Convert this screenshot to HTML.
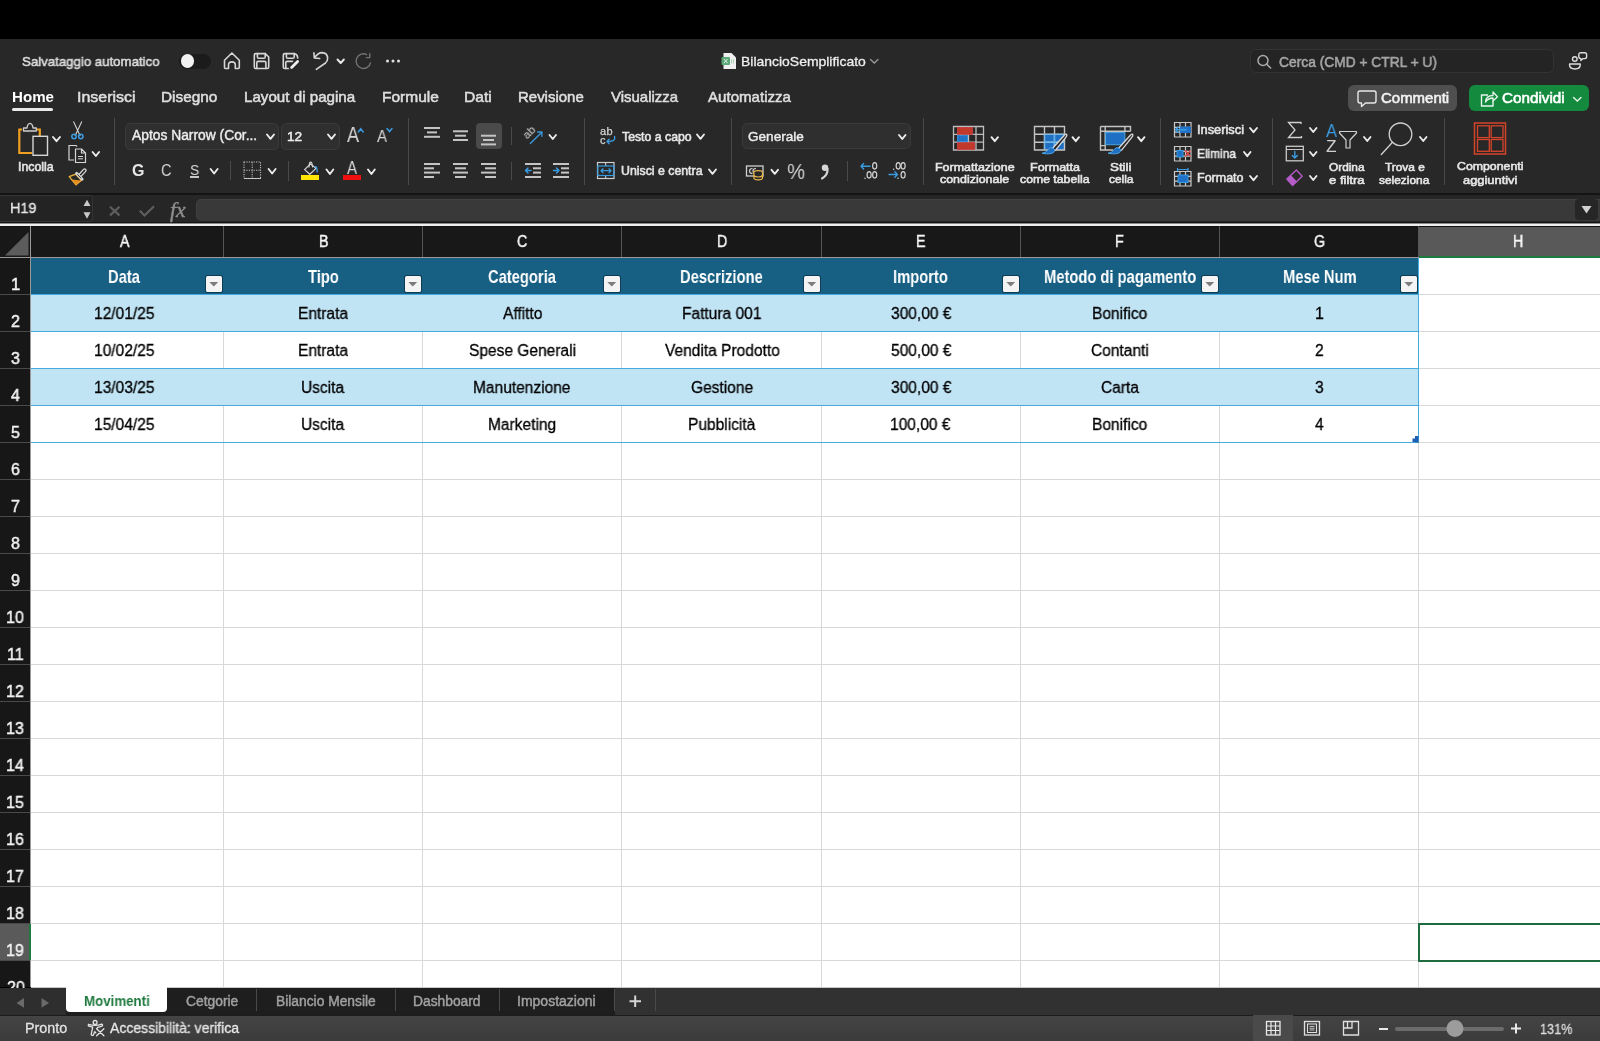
<!DOCTYPE html><html><head><meta charset='utf-8'><style>
*{box-sizing:border-box;margin:0;padding:0}
html,body{width:1600px;height:1041px;overflow:hidden;background:#000;font-family:"Liberation Sans",sans-serif;}
.a{position:absolute}
.t{position:absolute;white-space:nowrap;line-height:1;transform-origin:0 0;will-change:transform}
</style></head><body><div class="a" style="left:0px;top:0px;width:1600px;height:39px;background:#000"></div>
<div class="a" style="left:0px;top:39px;width:1600px;height:155px;background:#282828"></div>
<div class="a" style="left:0px;top:193px;width:1600px;height:2px;background:#141414"></div>
<div class="a" style="left:0px;top:195px;width:1600px;height:27px;background:#262626"></div>
<div class="a" style="left:0px;top:222px;width:1600px;height:1px;background:#141414"></div>
<div class="a" style="left:0px;top:223px;width:1600px;height:1px;background:#8a8a8a"></div>
<div class="a" style="left:0px;top:224px;width:1600px;height:2px;background:#efefef"></div>
<div class="a" style="left:0px;top:226px;width:1600px;height:1px;background:#111"></div>
<div class="a" style="left:0px;top:227px;width:1600px;height:30px;background:#181818"></div>
<div class="t" style="left:22.40px;top:54.00px;font-size:13.37px;color:#dcdcdc;font-weight:normal;transform:scaleX(0.9902);line-height:15px;-webkit-text-stroke:0.55px #dcdcdc;">Salvataggio automatico</div>
<div class="a" style="left:179px;top:53.5px;width:32px;height:15px;background:#1b1b1b;border-radius:8px"></div>
<div class="a" style="left:180.5px;top:54px;width:13.5px;height:13.5px;background:#f2f2f2;border-radius:50%"></div>
<div class="t" style="left:741.46px;top:54.00px;font-size:13.37px;color:#eeeeee;font-weight:normal;transform:scaleX(1.0439);line-height:15px;-webkit-text-stroke:0.3px #eeeeee;">BilancioSemplificato</div>
<div class="a" style="left:1250px;top:49px;width:304px;height:24px;background:#242424;border:1px solid #333;border-radius:6px"></div>
<div class="t" style="left:1278.71px;top:55.00px;font-size:13.81px;color:#a5a5a5;font-weight:normal;transform:scaleX(0.9990);line-height:15px;-webkit-text-stroke:0.55px #a5a5a5;">Cerca (CMD + CTRL + U)</div>
<div class="t" style="left:11.50px;top:88.00px;font-size:14.97px;color:#ffffff;font-weight:bold;transform:scaleX(1.0102);line-height:17px;">Home</div>
<div class="t" style="left:77.03px;top:88.00px;font-size:14.97px;color:#dedede;font-weight:normal;transform:scaleX(1.0663);line-height:17px;-webkit-text-stroke:0.55px #dedede;">Inserisci</div>
<div class="t" style="left:161.24px;top:88.00px;font-size:14.97px;color:#dedede;font-weight:normal;transform:scaleX(1.0266);line-height:17px;-webkit-text-stroke:0.55px #dedede;">Disegno</div>
<div class="t" style="left:243.76px;top:88.00px;font-size:14.97px;color:#dedede;font-weight:normal;transform:scaleX(1.0123);line-height:17px;-webkit-text-stroke:0.55px #dedede;">Layout di pagina</div>
<div class="t" style="left:381.73px;top:88.00px;font-size:14.97px;color:#dedede;font-weight:normal;transform:scaleX(1.0375);line-height:17px;-webkit-text-stroke:0.55px #dedede;">Formule</div>
<div class="t" style="left:464.22px;top:88.00px;font-size:14.97px;color:#dedede;font-weight:normal;transform:scaleX(1.0456);line-height:17px;-webkit-text-stroke:0.55px #dedede;">Dati</div>
<div class="t" style="left:517.52px;top:88.00px;font-size:14.97px;color:#dedede;font-weight:normal;transform:scaleX(0.9984);line-height:17px;-webkit-text-stroke:0.55px #dedede;">Revisione</div>
<div class="t" style="left:610.94px;top:88.00px;font-size:14.97px;color:#dedede;font-weight:normal;transform:scaleX(0.9987);line-height:17px;-webkit-text-stroke:0.55px #dedede;">Visualizza</div>
<div class="t" style="left:707.97px;top:88.00px;font-size:14.97px;color:#dedede;font-weight:normal;transform:scaleX(1.0078);line-height:17px;-webkit-text-stroke:0.55px #dedede;">Automatizza</div>
<div class="a" style="left:12px;top:108px;width:41px;height:3.2px;background:#e8e8e8;border-radius:2px"></div>
<div class="a" style="left:1348px;top:85px;width:109px;height:26px;background:#4f4f4f;border-radius:6px"></div>
<div class="t" style="left:1380.75px;top:91.00px;font-size:13.81px;color:#f2f2f2;font-weight:normal;transform:scaleX(1.0847);line-height:15px;-webkit-text-stroke:0.55px #f2f2f2;">Commenti</div>
<div class="a" style="left:1468.5px;top:85px;width:120.5px;height:26px;background:#138a3e;border-radius:6px"></div>
<div class="t" style="left:1501.84px;top:91.00px;font-size:13.81px;color:#ffffff;font-weight:normal;transform:scaleX(1.1055);line-height:15px;-webkit-text-stroke:0.55px #ffffff;">Condividi</div>
<div class="a" style="left:113.5px;top:118px;width:1.3px;height:67px;background:#4a4a4a"></div>
<div class="a" style="left:407.5px;top:118px;width:1.3px;height:67px;background:#4a4a4a"></div>
<div class="a" style="left:583.5px;top:118px;width:1.3px;height:67px;background:#4a4a4a"></div>
<div class="a" style="left:730.5px;top:118px;width:1.3px;height:67px;background:#4a4a4a"></div>
<div class="a" style="left:922.5px;top:118px;width:1.3px;height:67px;background:#4a4a4a"></div>
<div class="a" style="left:1159.5px;top:118px;width:1.3px;height:67px;background:#4a4a4a"></div>
<div class="a" style="left:1272px;top:118px;width:1.3px;height:67px;background:#4a4a4a"></div>
<div class="a" style="left:1443.5px;top:118px;width:1.3px;height:67px;background:#4a4a4a"></div>
<div class="a" style="left:230px;top:161px;width:1.3px;height:19px;background:#4a4a4a"></div>
<div class="a" style="left:288px;top:161px;width:1.3px;height:20px;background:#4a4a4a"></div>
<div class="a" style="left:510.5px;top:127px;width:1.3px;height:18px;background:#4a4a4a"></div>
<div class="a" style="left:510.5px;top:162px;width:1.3px;height:18px;background:#4a4a4a"></div>
<div class="a" style="left:846.5px;top:161px;width:1.3px;height:20px;background:#4a4a4a"></div>
<div class="t" style="left:17.66px;top:160.00px;font-size:11.92px;color:#e6e6e6;font-weight:normal;transform:scaleX(1.0372);line-height:14px;-webkit-text-stroke:0.55px #e6e6e6;">Incolla</div>
<div class="a" style="left:125px;top:123px;width:154px;height:26.5px;background:#2f2f2f;border:1px solid #3a3a3a;border-radius:5px"></div>
<div class="t" style="left:131.97px;top:128.00px;font-size:13.81px;color:#ededed;font-weight:normal;transform:scaleX(1.0017);line-height:15px;-webkit-text-stroke:0.4px #ededed;">Aptos Narrow (Cor...</div>
<div class="a" style="left:281px;top:123px;width:59px;height:26.5px;background:#2f2f2f;border:1px solid #3a3a3a;border-radius:5px"></div>
<div class="t" style="left:286.69px;top:129.00px;font-size:13.66px;color:#ededed;font-weight:normal;transform:scaleX(0.9724);line-height:15px;-webkit-text-stroke:0.5px #ededed;">12</div>
<div class="t" style="left:346.96px;top:123.00px;font-size:21.37px;color:#d8d8d8;font-weight:normal;transform:scaleX(0.8471);line-height:24px;">A</div>
<div class="t" style="left:376.97px;top:128.00px;font-size:15.99px;color:#d8d8d8;font-weight:normal;transform:scaleX(0.9434);line-height:17px;">A</div>
<div class="t" style="left:131.86px;top:162.00px;font-size:15.99px;color:#e6e6e6;font-weight:bold;transform:scaleX(0.9729);line-height:17px;">G</div>
<div class="t" style="left:161.08px;top:161.00px;font-size:16.42px;color:#d8d8d8;font-weight:normal;transform:scaleX(0.8821);line-height:18px;">C</div>
<div class="t" style="left:190.18px;top:161.00px;font-size:15.12px;color:#d8d8d8;font-weight:normal;transform:scaleX(0.9172);line-height:17px;">S</div>
<div class="a" style="left:190.3px;top:176.3px;width:9px;height:1.5px;background:#c8c8c8"></div>
<div class="a" style="left:243.5px;top:177.5px;width:17.5px;height:1.8px;background:#d6d6d6"></div>
<div class="a" style="left:301px;top:175.3px;width:18px;height:4.6px;background:#ffe600"></div>
<div class="t" style="left:346.97px;top:158.00px;font-size:17.73px;color:#d8d8d8;font-weight:normal;transform:scaleX(0.8506);line-height:20px;">A</div>
<div class="a" style="left:343px;top:175.3px;width:17.5px;height:4.6px;background:#f01010"></div>
<div class="a" style="left:476px;top:123.4px;width:25.7px;height:25.3px;background:#4a4a4a;border-radius:4px"></div>
<div class="t" style="left:523px;top:127px;font-size:11.5px;color:#d0d0d0;transform:rotate(-45deg);transform-origin:50% 50%">ab</div>
<div class="t" style="left:599.5px;top:127px;font-size:11px;color:#d4d4d4;line-height:9px;letter-spacing:0.4px;-webkit-text-stroke:0.25px #d4d4d4">ab<br>c</div>
<div class="t" style="left:621.73px;top:130.00px;font-size:12.06px;color:#e6e6e6;font-weight:normal;transform:scaleX(1.0201);line-height:14px;-webkit-text-stroke:0.55px #e6e6e6;">Testo a capo</div>
<div class="t" style="left:621.05px;top:164.00px;font-size:12.21px;color:#e6e6e6;font-weight:normal;transform:scaleX(1.0097);line-height:14px;-webkit-text-stroke:0.55px #e6e6e6;">Unisci e centra</div>
<div class="a" style="left:742px;top:123.3px;width:169px;height:26px;background:#2f2f2f;border:1px solid #3a3a3a;border-radius:5px"></div>
<div class="t" style="left:748.02px;top:129.00px;font-size:13.08px;color:#ededed;font-weight:normal;transform:scaleX(1.0383);line-height:15px;-webkit-text-stroke:0.4px #ededed;">Generale</div>
<div class="t" style="left:787.09px;top:159.00px;font-size:22.53px;color:#cfcfcf;font-weight:normal;transform:scaleX(0.9051);line-height:25px;">%</div>
<div class="t" style="left:934.68px;top:161.00px;font-size:11.05px;color:#e6e6e6;font-weight:normal;transform:scaleX(1.1271);line-height:12px;-webkit-text-stroke:0.55px #e6e6e6;">Formattazione</div>
<div class="t" style="left:940.48px;top:173.00px;font-size:11.19px;color:#e6e6e6;font-weight:normal;transform:scaleX(1.1101);line-height:12px;-webkit-text-stroke:0.55px #e6e6e6;">condizionale</div>
<div class="t" style="left:1029.97px;top:161.00px;font-size:11.05px;color:#e6e6e6;font-weight:normal;transform:scaleX(1.1316);line-height:12px;-webkit-text-stroke:0.55px #e6e6e6;">Formatta</div>
<div class="t" style="left:1020.49px;top:173.00px;font-size:11.19px;color:#e6e6e6;font-weight:normal;transform:scaleX(1.0953);line-height:12px;-webkit-text-stroke:0.55px #e6e6e6;">come tabella</div>
<div class="t" style="left:1110.40px;top:161.00px;font-size:11.05px;color:#e6e6e6;font-weight:normal;transform:scaleX(1.2078);line-height:12px;-webkit-text-stroke:0.55px #e6e6e6;">Stili</div>
<div class="t" style="left:1108.50px;top:173.00px;font-size:11.19px;color:#e6e6e6;font-weight:normal;transform:scaleX(1.0637);line-height:12px;-webkit-text-stroke:0.55px #e6e6e6;">cella</div>
<div class="t" style="left:1196.82px;top:123.00px;font-size:12.35px;color:#e6e6e6;font-weight:normal;transform:scaleX(1.0383);line-height:14px;-webkit-text-stroke:0.55px #e6e6e6;">Inserisci</div>
<div class="a" style="left:1174px;top:150.5px;width:18px;height:6.5px;background:#282828"></div>
<div class="t" style="left:1197.03px;top:147.00px;font-size:12.21px;color:#e6e6e6;font-weight:normal;transform:scaleX(0.9732);line-height:14px;-webkit-text-stroke:0.55px #e6e6e6;">Elimina</div>
<div class="t" style="left:1196.97px;top:171.00px;font-size:12.21px;color:#e6e6e6;font-weight:normal;transform:scaleX(1.0238);line-height:14px;-webkit-text-stroke:0.55px #e6e6e6;">Formato</div>
<div class="t" style="left:1325.97px;top:121.00px;font-size:17.73px;color:#3a9be0;font-weight:normal;transform:scaleX(0.9356);line-height:20px;">A</div>
<div class="t" style="left:1325.96px;top:137.00px;font-size:17.01px;color:#d0d0d0;font-weight:normal;transform:scaleX(1.0175);line-height:19px;">Z</div>
<div class="t" style="left:1329.44px;top:161.00px;font-size:10.61px;color:#e6e6e6;font-weight:normal;transform:scaleX(1.1163);line-height:12px;-webkit-text-stroke:0.55px #e6e6e6;">Ordina</div>
<div class="t" style="left:1329.45px;top:174.00px;font-size:10.61px;color:#e6e6e6;font-weight:normal;transform:scaleX(1.2299);line-height:12px;-webkit-text-stroke:0.55px #e6e6e6;">e filtra</div>
<div class="t" style="left:1384.74px;top:161.00px;font-size:10.61px;color:#e6e6e6;font-weight:normal;transform:scaleX(1.1182);line-height:12px;-webkit-text-stroke:0.55px #e6e6e6;">Trova e</div>
<div class="t" style="left:1378.68px;top:174.00px;font-size:10.61px;color:#e6e6e6;font-weight:normal;transform:scaleX(1.1223);line-height:12px;-webkit-text-stroke:0.55px #e6e6e6;">seleziona</div>
<div class="t" style="left:1457.38px;top:160.00px;font-size:10.90px;color:#e6e6e6;font-weight:normal;transform:scaleX(1.1304);line-height:12px;-webkit-text-stroke:0.55px #e6e6e6;">Componenti</div>
<div class="t" style="left:1463.46px;top:174.00px;font-size:10.90px;color:#e6e6e6;font-weight:normal;transform:scaleX(1.1812);line-height:12px;-webkit-text-stroke:0.55px #e6e6e6;">aggiuntivi</div>
<div class="a" style="left:0px;top:195px;width:92.5px;height:27px;background:#232323;border:1px solid #343434;border-left:none;border-radius:0 3px 3px 0"></div>
<div class="t" style="left:10.32px;top:200.00px;font-size:14.83px;color:#e8e8e8;font-weight:normal;transform:scaleX(0.9692);line-height:16px;-webkit-text-stroke:0.35px #e8e8e8;">H19</div>
<div class="t" style="left:169.5px;top:200px;font-family:'Liberation Serif',serif;font-style:italic;font-size:20px;color:#8e8e8e;-webkit-text-stroke:0.4px #8e8e8e;transform:scaleX(1.08)">fx</div>
<div class="a" style="left:196px;top:199px;width:1404px;height:22px;background:#393939;border-top:1px solid #424242;border-left:1px solid #404040;border-radius:5px 0 0 5px"></div>
<div class="a" style="left:1575px;top:199px;width:23px;height:21px;background:#262626;border-radius:4px"></div>
<div class="a" style="left:31px;top:257px;width:1569px;height:730px;background:#fff"></div>
<div class="a" style="left:0px;top:257px;width:30px;height:730px;background:#171717"></div>
<div class="a" style="left:31px;top:257px;width:1569px;height:1px;background:#d8d8d8"></div>
<div class="a" style="left:0px;top:257px;width:30px;height:1px;background:#4a4a4a"></div>
<div class="a" style="left:31px;top:294px;width:1569px;height:1px;background:#d8d8d8"></div>
<div class="a" style="left:0px;top:294px;width:30px;height:1px;background:#4a4a4a"></div>
<div class="a" style="left:31px;top:331px;width:1569px;height:1px;background:#d8d8d8"></div>
<div class="a" style="left:0px;top:331px;width:30px;height:1px;background:#4a4a4a"></div>
<div class="a" style="left:31px;top:368px;width:1569px;height:1px;background:#d8d8d8"></div>
<div class="a" style="left:0px;top:368px;width:30px;height:1px;background:#4a4a4a"></div>
<div class="a" style="left:31px;top:405px;width:1569px;height:1px;background:#d8d8d8"></div>
<div class="a" style="left:0px;top:405px;width:30px;height:1px;background:#4a4a4a"></div>
<div class="a" style="left:31px;top:442px;width:1569px;height:1px;background:#d8d8d8"></div>
<div class="a" style="left:0px;top:442px;width:30px;height:1px;background:#4a4a4a"></div>
<div class="a" style="left:31px;top:479px;width:1569px;height:1px;background:#d8d8d8"></div>
<div class="a" style="left:0px;top:479px;width:30px;height:1px;background:#4a4a4a"></div>
<div class="a" style="left:31px;top:516px;width:1569px;height:1px;background:#d8d8d8"></div>
<div class="a" style="left:0px;top:516px;width:30px;height:1px;background:#4a4a4a"></div>
<div class="a" style="left:31px;top:553px;width:1569px;height:1px;background:#d8d8d8"></div>
<div class="a" style="left:0px;top:553px;width:30px;height:1px;background:#4a4a4a"></div>
<div class="a" style="left:31px;top:590px;width:1569px;height:1px;background:#d8d8d8"></div>
<div class="a" style="left:0px;top:590px;width:30px;height:1px;background:#4a4a4a"></div>
<div class="a" style="left:31px;top:627px;width:1569px;height:1px;background:#d8d8d8"></div>
<div class="a" style="left:0px;top:627px;width:30px;height:1px;background:#4a4a4a"></div>
<div class="a" style="left:31px;top:664px;width:1569px;height:1px;background:#d8d8d8"></div>
<div class="a" style="left:0px;top:664px;width:30px;height:1px;background:#4a4a4a"></div>
<div class="a" style="left:31px;top:701px;width:1569px;height:1px;background:#d8d8d8"></div>
<div class="a" style="left:0px;top:701px;width:30px;height:1px;background:#4a4a4a"></div>
<div class="a" style="left:31px;top:738px;width:1569px;height:1px;background:#d8d8d8"></div>
<div class="a" style="left:0px;top:738px;width:30px;height:1px;background:#4a4a4a"></div>
<div class="a" style="left:31px;top:775px;width:1569px;height:1px;background:#d8d8d8"></div>
<div class="a" style="left:0px;top:775px;width:30px;height:1px;background:#4a4a4a"></div>
<div class="a" style="left:31px;top:812px;width:1569px;height:1px;background:#d8d8d8"></div>
<div class="a" style="left:0px;top:812px;width:30px;height:1px;background:#4a4a4a"></div>
<div class="a" style="left:31px;top:849px;width:1569px;height:1px;background:#d8d8d8"></div>
<div class="a" style="left:0px;top:849px;width:30px;height:1px;background:#4a4a4a"></div>
<div class="a" style="left:31px;top:886px;width:1569px;height:1px;background:#d8d8d8"></div>
<div class="a" style="left:0px;top:886px;width:30px;height:1px;background:#4a4a4a"></div>
<div class="a" style="left:31px;top:923px;width:1569px;height:1px;background:#d8d8d8"></div>
<div class="a" style="left:0px;top:923px;width:30px;height:1px;background:#4a4a4a"></div>
<div class="a" style="left:31px;top:960px;width:1569px;height:1px;background:#d8d8d8"></div>
<div class="a" style="left:0px;top:960px;width:30px;height:1px;background:#4a4a4a"></div>
<div class="a" style="left:223px;top:257px;width:1px;height:730px;background:#d8d8d8"></div>
<div class="a" style="left:223px;top:226px;width:1px;height:31px;background:#555"></div>
<div class="a" style="left:422px;top:257px;width:1px;height:730px;background:#d8d8d8"></div>
<div class="a" style="left:422px;top:226px;width:1px;height:31px;background:#555"></div>
<div class="a" style="left:621px;top:257px;width:1px;height:730px;background:#d8d8d8"></div>
<div class="a" style="left:621px;top:226px;width:1px;height:31px;background:#555"></div>
<div class="a" style="left:821px;top:257px;width:1px;height:730px;background:#d8d8d8"></div>
<div class="a" style="left:821px;top:226px;width:1px;height:31px;background:#555"></div>
<div class="a" style="left:1020px;top:257px;width:1px;height:730px;background:#d8d8d8"></div>
<div class="a" style="left:1020px;top:226px;width:1px;height:31px;background:#555"></div>
<div class="a" style="left:1219px;top:257px;width:1px;height:730px;background:#d8d8d8"></div>
<div class="a" style="left:1219px;top:226px;width:1px;height:31px;background:#555"></div>
<div class="a" style="left:1418px;top:257px;width:1px;height:730px;background:#d8d8d8"></div>
<div class="a" style="left:1418px;top:226px;width:1px;height:31px;background:#555"></div>
<div class="a" style="left:30px;top:226px;width:1px;height:761px;background:#9a9a9a"></div>
<div class="a" style="left:0px;top:257px;width:1600px;height:1px;background:#9a9a9a"></div>
<div class="a" style="left:31px;top:258px;width:1387px;height:36px;background:#175f83"></div>
<div class="a" style="left:31px;top:294px;width:1387px;height:37px;background:#c1e4f5"></div>
<div class="a" style="left:31px;top:331px;width:1387px;height:37px;background:#ffffff"></div>
<div class="a" style="left:223px;top:331px;width:1px;height:37px;background:#d8d8d8"></div>
<div class="a" style="left:422px;top:331px;width:1px;height:37px;background:#d8d8d8"></div>
<div class="a" style="left:621px;top:331px;width:1px;height:37px;background:#d8d8d8"></div>
<div class="a" style="left:821px;top:331px;width:1px;height:37px;background:#d8d8d8"></div>
<div class="a" style="left:1020px;top:331px;width:1px;height:37px;background:#d8d8d8"></div>
<div class="a" style="left:1219px;top:331px;width:1px;height:37px;background:#d8d8d8"></div>
<div class="a" style="left:31px;top:368px;width:1387px;height:37px;background:#c1e4f5"></div>
<div class="a" style="left:31px;top:405px;width:1387px;height:37px;background:#ffffff"></div>
<div class="a" style="left:223px;top:405px;width:1px;height:37px;background:#d8d8d8"></div>
<div class="a" style="left:422px;top:405px;width:1px;height:37px;background:#d8d8d8"></div>
<div class="a" style="left:621px;top:405px;width:1px;height:37px;background:#d8d8d8"></div>
<div class="a" style="left:821px;top:405px;width:1px;height:37px;background:#d8d8d8"></div>
<div class="a" style="left:1020px;top:405px;width:1px;height:37px;background:#d8d8d8"></div>
<div class="a" style="left:1219px;top:405px;width:1px;height:37px;background:#d8d8d8"></div>
<div class="a" style="left:31px;top:294px;width:1388px;height:1px;background:#45aade"></div>
<div class="a" style="left:31px;top:331px;width:1388px;height:1px;background:#45aade"></div>
<div class="a" style="left:31px;top:368px;width:1388px;height:1px;background:#45aade"></div>
<div class="a" style="left:31px;top:405px;width:1388px;height:1px;background:#45aade"></div>
<div class="a" style="left:31px;top:442px;width:1388px;height:1px;background:#45aade"></div>
<div class="a" style="left:1418px;top:258px;width:1px;height:185px;background:#45aade"></div>
<div class="t" style="left:108.09px;top:267.00px;font-size:17.59px;color:#ffffff;font-weight:bold;transform:scaleX(0.8380);line-height:20px;">Data</div>
<div class="a" style="left:205.5px;top:275.5px;width:16.5px;height:16.5px;background:#f4f4f4;border-radius:1.5px;box-shadow:0 0 0 1px #0d3d55"></div>
<div class="t" style="left:308.29px;top:267.00px;font-size:17.59px;color:#ffffff;font-weight:bold;transform:scaleX(0.8380);line-height:20px;">Tipo</div>
<div class="a" style="left:404.5px;top:275.5px;width:16.5px;height:16.5px;background:#f4f4f4;border-radius:1.5px;box-shadow:0 0 0 1px #0d3d55"></div>
<div class="t" style="left:488.16px;top:267.00px;font-size:17.59px;color:#ffffff;font-weight:bold;transform:scaleX(0.8380);line-height:20px;">Categoria</div>
<div class="a" style="left:603.5px;top:275.5px;width:16.5px;height:16.5px;background:#f4f4f4;border-radius:1.5px;box-shadow:0 0 0 1px #0d3d55"></div>
<div class="t" style="left:680.40px;top:267.00px;font-size:17.59px;color:#ffffff;font-weight:bold;transform:scaleX(0.8380);line-height:20px;">Descrizione</div>
<div class="a" style="left:803.5px;top:275.5px;width:16.5px;height:16.5px;background:#f4f4f4;border-radius:1.5px;box-shadow:0 0 0 1px #0d3d55"></div>
<div class="t" style="left:893.37px;top:267.00px;font-size:17.59px;color:#ffffff;font-weight:bold;transform:scaleX(0.8380);line-height:20px;">Importo</div>
<div class="a" style="left:1002.5px;top:275.5px;width:16.5px;height:16.5px;background:#f4f4f4;border-radius:1.5px;box-shadow:0 0 0 1px #0d3d55"></div>
<div class="t" style="left:1043.66px;top:267.00px;font-size:17.59px;color:#ffffff;font-weight:bold;transform:scaleX(0.8380);line-height:20px;">Metodo di pagamento</div>
<div class="a" style="left:1201.5px;top:275.5px;width:16.5px;height:16.5px;background:#f4f4f4;border-radius:1.5px;box-shadow:0 0 0 1px #0d3d55"></div>
<div class="t" style="left:1282.61px;top:267.00px;font-size:17.59px;color:#ffffff;font-weight:bold;transform:scaleX(0.8380);line-height:20px;">Mese Num</div>
<div class="a" style="left:1400.5px;top:275.5px;width:16.5px;height:16.5px;background:#f4f4f4;border-radius:1.5px;box-shadow:0 0 0 1px #0d3d55"></div>
<div class="t" style="left:94.13px;top:305.00px;font-size:16.00px;color:#000000;font-weight:normal;transform:scaleX(0.9700);line-height:17px;-webkit-text-stroke:0.3px #000000;">12/01/25</div>
<div class="t" style="left:297.84px;top:305.00px;font-size:16.00px;color:#000000;font-weight:normal;transform:scaleX(0.9700);line-height:17px;-webkit-text-stroke:0.3px #000000;">Entrata</div>
<div class="t" style="left:503.11px;top:305.00px;font-size:16.00px;color:#000000;font-weight:normal;transform:scaleX(0.9700);line-height:17px;-webkit-text-stroke:0.3px #000000;">Affitto</div>
<div class="t" style="left:682.05px;top:305.00px;font-size:16.00px;color:#000000;font-weight:normal;transform:scaleX(0.9700);line-height:17px;-webkit-text-stroke:0.3px #000000;">Fattura 001</div>
<div class="t" style="left:890.61px;top:305.00px;font-size:16.00px;color:#000000;font-weight:normal;transform:scaleX(0.9700);line-height:17px;-webkit-text-stroke:0.3px #000000;">300,00&nbsp;€</div>
<div class="t" style="left:1092.08px;top:305.00px;font-size:16.00px;color:#000000;font-weight:normal;transform:scaleX(0.9700);line-height:17px;-webkit-text-stroke:0.3px #000000;">Bonifico</div>
<div class="t" style="left:1314.97px;top:305.00px;font-size:16.00px;color:#000000;font-weight:normal;transform:scaleX(0.9700);line-height:17px;-webkit-text-stroke:0.3px #000000;">1</div>
<div class="t" style="left:94.13px;top:342.00px;font-size:16.00px;color:#000000;font-weight:normal;transform:scaleX(0.9700);line-height:17px;-webkit-text-stroke:0.3px #000000;">10/02/25</div>
<div class="t" style="left:297.84px;top:342.00px;font-size:16.00px;color:#000000;font-weight:normal;transform:scaleX(0.9700);line-height:17px;-webkit-text-stroke:0.3px #000000;">Entrata</div>
<div class="t" style="left:469.18px;top:342.00px;font-size:16.00px;color:#000000;font-weight:normal;transform:scaleX(0.9700);line-height:17px;-webkit-text-stroke:0.3px #000000;">Spese Generali</div>
<div class="t" style="left:664.91px;top:342.00px;font-size:16.00px;color:#000000;font-weight:normal;transform:scaleX(0.9700);line-height:17px;-webkit-text-stroke:0.3px #000000;">Vendita Prodotto</div>
<div class="t" style="left:890.60px;top:342.00px;font-size:16.00px;color:#000000;font-weight:normal;transform:scaleX(0.9700);line-height:17px;-webkit-text-stroke:0.3px #000000;">500,00&nbsp;€</div>
<div class="t" style="left:1091.23px;top:342.00px;font-size:16.00px;color:#000000;font-weight:normal;transform:scaleX(0.9700);line-height:17px;-webkit-text-stroke:0.3px #000000;">Contanti</div>
<div class="t" style="left:1315.19px;top:342.00px;font-size:16.00px;color:#000000;font-weight:normal;transform:scaleX(0.9700);line-height:17px;-webkit-text-stroke:0.3px #000000;">2</div>
<div class="t" style="left:94.13px;top:379.00px;font-size:16.00px;color:#000000;font-weight:normal;transform:scaleX(0.9700);line-height:17px;-webkit-text-stroke:0.3px #000000;">13/03/25</div>
<div class="t" style="left:301.34px;top:379.00px;font-size:16.00px;color:#000000;font-weight:normal;transform:scaleX(0.9700);line-height:17px;-webkit-text-stroke:0.3px #000000;">Uscita</div>
<div class="t" style="left:473.46px;top:379.00px;font-size:16.00px;color:#000000;font-weight:normal;transform:scaleX(0.9700);line-height:17px;-webkit-text-stroke:0.3px #000000;">Manutenzione</div>
<div class="t" style="left:690.90px;top:379.00px;font-size:16.00px;color:#000000;font-weight:normal;transform:scaleX(0.9700);line-height:17px;-webkit-text-stroke:0.3px #000000;">Gestione</div>
<div class="t" style="left:890.61px;top:379.00px;font-size:16.00px;color:#000000;font-weight:normal;transform:scaleX(0.9700);line-height:17px;-webkit-text-stroke:0.3px #000000;">300,00&nbsp;€</div>
<div class="t" style="left:1100.63px;top:379.00px;font-size:16.00px;color:#000000;font-weight:normal;transform:scaleX(0.9700);line-height:17px;-webkit-text-stroke:0.3px #000000;">Carta</div>
<div class="t" style="left:1315.22px;top:379.00px;font-size:16.00px;color:#000000;font-weight:normal;transform:scaleX(0.9700);line-height:17px;-webkit-text-stroke:0.3px #000000;">3</div>
<div class="t" style="left:94.13px;top:416.00px;font-size:16.00px;color:#000000;font-weight:normal;transform:scaleX(0.9700);line-height:17px;-webkit-text-stroke:0.3px #000000;">15/04/25</div>
<div class="t" style="left:301.34px;top:416.00px;font-size:16.00px;color:#000000;font-weight:normal;transform:scaleX(0.9700);line-height:17px;-webkit-text-stroke:0.3px #000000;">Uscita</div>
<div class="t" style="left:488.29px;top:416.00px;font-size:16.00px;color:#000000;font-weight:normal;transform:scaleX(0.9700);line-height:17px;-webkit-text-stroke:0.3px #000000;">Marketing</div>
<div class="t" style="left:687.71px;top:416.00px;font-size:16.00px;color:#000000;font-weight:normal;transform:scaleX(0.9700);line-height:17px;-webkit-text-stroke:0.3px #000000;">Pubblicità</div>
<div class="t" style="left:890.32px;top:416.00px;font-size:16.00px;color:#000000;font-weight:normal;transform:scaleX(0.9700);line-height:17px;-webkit-text-stroke:0.3px #000000;">100,00&nbsp;€</div>
<div class="t" style="left:1092.08px;top:416.00px;font-size:16.00px;color:#000000;font-weight:normal;transform:scaleX(0.9700);line-height:17px;-webkit-text-stroke:0.3px #000000;">Bonifico</div>
<div class="t" style="left:1315.24px;top:416.00px;font-size:16.00px;color:#000000;font-weight:normal;transform:scaleX(0.9700);line-height:17px;-webkit-text-stroke:0.3px #000000;">4</div>
<div class="t" style="left:119.87px;top:232.00px;font-size:16.13px;color:#f6f6f6;font-weight:normal;transform:scaleX(0.8782);line-height:18px;-webkit-text-stroke:0.5px #f6f6f6;">A</div>
<div class="t" style="left:318.56px;top:232.00px;font-size:16.13px;color:#f6f6f6;font-weight:normal;transform:scaleX(0.8782);line-height:18px;-webkit-text-stroke:0.5px #f6f6f6;">B</div>
<div class="t" style="left:517.29px;top:232.00px;font-size:16.13px;color:#f6f6f6;font-weight:normal;transform:scaleX(0.8782);line-height:18px;-webkit-text-stroke:0.5px #f6f6f6;">C</div>
<div class="t" style="left:716.64px;top:232.00px;font-size:16.13px;color:#f6f6f6;font-weight:normal;transform:scaleX(0.8782);line-height:18px;-webkit-text-stroke:0.5px #f6f6f6;">D</div>
<div class="t" style="left:915.99px;top:232.00px;font-size:16.13px;color:#f6f6f6;font-weight:normal;transform:scaleX(0.8782);line-height:18px;-webkit-text-stroke:0.5px #f6f6f6;">E</div>
<div class="t" style="left:1115.37px;top:232.00px;font-size:16.13px;color:#f6f6f6;font-weight:normal;transform:scaleX(0.8782);line-height:18px;-webkit-text-stroke:0.5px #f6f6f6;">F</div>
<div class="t" style="left:1314.16px;top:232.00px;font-size:16.13px;color:#f6f6f6;font-weight:normal;transform:scaleX(0.8782);line-height:18px;-webkit-text-stroke:0.5px #f6f6f6;">G</div>
<div class="a" style="left:1419px;top:227px;width:181px;height:30px;background:#595959"></div>
<div class="t" style="left:1512.88px;top:232.00px;font-size:16.13px;color:#f6f6f6;font-weight:normal;transform:scaleX(0.8782);line-height:18px;-webkit-text-stroke:0.5px #f6f6f6;">H</div>
<div class="a" style="left:1419px;top:256px;width:181px;height:2px;background:#1e7a3e"></div>
<div class="t" style="left:10.83px;top:275.00px;font-size:16.50px;color:#f4f4f4;font-weight:normal;transform:scaleX(0.9700);line-height:18px;-webkit-text-stroke:0.45px #f4f4f4;">1</div>
<div class="t" style="left:11.05px;top:312.00px;font-size:16.50px;color:#f4f4f4;font-weight:normal;transform:scaleX(0.9700);line-height:18px;-webkit-text-stroke:0.45px #f4f4f4;">2</div>
<div class="t" style="left:11.09px;top:349.00px;font-size:16.50px;color:#f4f4f4;font-weight:normal;transform:scaleX(0.9700);line-height:18px;-webkit-text-stroke:0.45px #f4f4f4;">3</div>
<div class="t" style="left:11.11px;top:386.00px;font-size:16.50px;color:#f4f4f4;font-weight:normal;transform:scaleX(0.9700);line-height:18px;-webkit-text-stroke:0.45px #f4f4f4;">4</div>
<div class="t" style="left:11.06px;top:423.00px;font-size:16.50px;color:#f4f4f4;font-weight:normal;transform:scaleX(0.9700);line-height:18px;-webkit-text-stroke:0.45px #f4f4f4;">5</div>
<div class="t" style="left:10.99px;top:460.00px;font-size:16.50px;color:#f4f4f4;font-weight:normal;transform:scaleX(0.9700);line-height:18px;-webkit-text-stroke:0.45px #f4f4f4;">6</div>
<div class="t" style="left:11.04px;top:497.00px;font-size:16.50px;color:#f4f4f4;font-weight:normal;transform:scaleX(0.9700);line-height:18px;-webkit-text-stroke:0.45px #f4f4f4;">7</div>
<div class="t" style="left:11.05px;top:534.00px;font-size:16.50px;color:#f4f4f4;font-weight:normal;transform:scaleX(0.9700);line-height:18px;-webkit-text-stroke:0.45px #f4f4f4;">8</div>
<div class="t" style="left:11.06px;top:571.00px;font-size:16.50px;color:#f4f4f4;font-weight:normal;transform:scaleX(0.9700);line-height:18px;-webkit-text-stroke:0.45px #f4f4f4;">9</div>
<div class="t" style="left:6.30px;top:608.00px;font-size:16.50px;color:#f4f4f4;font-weight:normal;transform:scaleX(0.9700);line-height:18px;-webkit-text-stroke:0.45px #f4f4f4;">10</div>
<div class="t" style="left:6.97px;top:645.00px;font-size:16.50px;color:#f4f4f4;font-weight:normal;transform:scaleX(0.9700);line-height:18px;-webkit-text-stroke:0.45px #f4f4f4;">11</div>
<div class="t" style="left:6.39px;top:682.00px;font-size:16.50px;color:#f4f4f4;font-weight:normal;transform:scaleX(0.9700);line-height:18px;-webkit-text-stroke:0.45px #f4f4f4;">12</div>
<div class="t" style="left:6.34px;top:719.00px;font-size:16.50px;color:#f4f4f4;font-weight:normal;transform:scaleX(0.9700);line-height:18px;-webkit-text-stroke:0.45px #f4f4f4;">13</div>
<div class="t" style="left:6.23px;top:756.00px;font-size:16.50px;color:#f4f4f4;font-weight:normal;transform:scaleX(0.9700);line-height:18px;-webkit-text-stroke:0.45px #f4f4f4;">14</div>
<div class="t" style="left:6.32px;top:793.00px;font-size:16.50px;color:#f4f4f4;font-weight:normal;transform:scaleX(0.9700);line-height:18px;-webkit-text-stroke:0.45px #f4f4f4;">15</div>
<div class="t" style="left:6.34px;top:830.00px;font-size:16.50px;color:#f4f4f4;font-weight:normal;transform:scaleX(0.9700);line-height:18px;-webkit-text-stroke:0.45px #f4f4f4;">16</div>
<div class="t" style="left:6.39px;top:867.00px;font-size:16.50px;color:#f4f4f4;font-weight:normal;transform:scaleX(0.9700);line-height:18px;-webkit-text-stroke:0.45px #f4f4f4;">17</div>
<div class="t" style="left:6.34px;top:904.00px;font-size:16.50px;color:#f4f4f4;font-weight:normal;transform:scaleX(0.9700);line-height:18px;-webkit-text-stroke:0.45px #f4f4f4;">18</div>
<div class="a" style="left:0px;top:924px;width:29px;height:36px;background:#5a5a5a"></div>
<div class="t" style="left:6.37px;top:941.00px;font-size:16.50px;color:#f4f4f4;font-weight:normal;transform:scaleX(0.9700);line-height:18px;-webkit-text-stroke:0.45px #f4f4f4;">19</div>
<div class="t" style="left:6.51px;top:978.00px;font-size:16.50px;color:#f4f4f4;font-weight:normal;transform:scaleX(0.9700);line-height:18px;-webkit-text-stroke:0.45px #f4f4f4;">20</div>
<div class="a" style="left:1418px;top:922.5px;width:183px;height:39px;border:2px solid #1d6b3f;border-right:none"></div>
<div class="a" style="left:29px;top:924px;width:2px;height:36px;background:#1e7a3e"></div>
<div class="a" style="left:31px;top:987px;width:1569px;height:1px;background:#c8c8c8"></div>
<div class="a" style="left:0px;top:988px;width:1600px;height:27px;background:#1e1e1e"></div>
<div class="a" style="left:0px;top:988px;width:66px;height:27px;background:#2e2e2e"></div>
<div class="a" style="left:614.5px;top:988px;width:986px;height:27px;background:#313131"></div>
<div class="a" style="left:0px;top:1015px;width:1600px;height:1px;background:#1c1c1c"></div>
<div class="a" style="left:66px;top:987px;width:101px;height:24.5px;background:#ffffff;border-radius:0 0 4px 4px"></div>
<div class="t" style="left:84.12px;top:994.00px;font-size:13.81px;color:#1f7a3f;font-weight:bold;transform:scaleX(0.9638);line-height:15px;">Movimenti</div>
<div class="t" style="left:185.81px;top:994.00px;font-size:13.81px;color:#a0a0a0;font-weight:normal;transform:scaleX(1.0020);line-height:15px;-webkit-text-stroke:0.45px #a0a0a0;">Cetgorie</div>
<div class="t" style="left:275.87px;top:994.00px;font-size:13.81px;color:#a0a0a0;font-weight:normal;transform:scaleX(0.9998);line-height:15px;-webkit-text-stroke:0.45px #a0a0a0;">Bilancio Mensile</div>
<div class="t" style="left:413.37px;top:994.00px;font-size:13.81px;color:#a0a0a0;font-weight:normal;transform:scaleX(0.9995);line-height:15px;-webkit-text-stroke:0.45px #a0a0a0;">Dashboard</div>
<div class="t" style="left:517.21px;top:994.00px;font-size:13.81px;color:#a0a0a0;font-weight:normal;transform:scaleX(1.0156);line-height:15px;-webkit-text-stroke:0.45px #a0a0a0;">Impostazioni</div>
<div class="a" style="left:256px;top:989px;width:1px;height:22px;background:#4a4a4a"></div>
<div class="a" style="left:395px;top:989px;width:1px;height:22px;background:#4a4a4a"></div>
<div class="a" style="left:499px;top:989px;width:1px;height:22px;background:#4a4a4a"></div>
<div class="a" style="left:614px;top:989px;width:1px;height:22px;background:#4a4a4a"></div>
<div class="a" style="left:655px;top:989px;width:1px;height:22px;background:#4a4a4a"></div>
<div class="a" style="left:0px;top:1016px;width:1600px;height:25px;background:linear-gradient(#444444,#3b3b3b)"></div>
<div class="t" style="left:25.32px;top:1020.00px;font-size:14.10px;color:#e2e2e2;font-weight:normal;transform:scaleX(1.0176);line-height:16px;-webkit-text-stroke:0.3px #e2e2e2;">Pronto</div>
<div class="t" style="left:110.47px;top:1020.00px;font-size:14.10px;color:#e6e6e6;font-weight:normal;transform:scaleX(0.9919);line-height:16px;-webkit-text-stroke:0.3px #e6e6e6;">Accessibilità: verifica</div>
<div class="a" style="left:1253px;top:1015px;width:40px;height:26px;background:#4a4a4a"></div>
<div class="a" style="left:1379px;top:1027.5px;width:9px;height:2px;background:#e8e8e8"></div>
<div class="a" style="left:1395px;top:1026.5px;width:109px;height:4px;background:#6c6c6c;border-radius:2px"></div>
<div class="t" style="left:1540.04px;top:1021.00px;font-size:14.53px;color:#dcdcdc;font-weight:normal;transform:scaleX(0.8720);line-height:16px;-webkit-text-stroke:0.3px #dcdcdc;">131%</div>
<svg class="a" style="left:0;top:0;overflow:visible" width="1600" height="1041" viewBox="0 0 1600 1041"><path d="M224.5 60.2 L231.9 53 L239.3 60.2 L239.3 67.5 Q239.3 68.5 238.3 68.5 L235.3 68.5 L235.3 65 Q235.3 61.9 231.9 61.9 Q228.5 61.9 228.5 65 L228.5 68.5 L225.5 68.5 Q224.5 68.5 224.5 67.5 Z" fill="none" stroke="#d6d6d6" stroke-width="1.6" stroke-linejoin="round" stroke-linecap="round"/><path d="M254.3 55 Q254.3 53.6 255.8 53.6 L265.3 53.6 L268.7 57 L268.7 67 Q268.7 68.5 267.2 68.5 L255.8 68.5 Q254.3 68.5 254.3 67 Z" fill="none" stroke="#d6d6d6" stroke-width="1.6" stroke-linejoin="round" stroke-linecap="round"/><path d="M257.4 53.6 L257.4 57 Q257.4 58.3 258.7 58.3 L263.9 58.3 Q265.2 58.3 265.2 57 L265.2 53.6 M256.8 68.5 L256.8 62.8 Q256.8 61.4 258.1 61.4 L264.6 61.4 Q265.9 61.4 265.9 62.8 L265.9 68.5" fill="none" stroke="#d6d6d6" stroke-width="1.6" stroke-linejoin="round" stroke-linecap="round"/><path d="M289.8 68.5 L284.8 68.5 Q283.3 68.5 283.3 67 L283.3 55 Q283.3 53.6 284.8 53.6 L294.3 53.6 Q297.7 54.3 297.7 58.3" fill="none" stroke="#d6d6d6" stroke-width="1.6" stroke-linejoin="round" stroke-linecap="round"/><path d="M286.4 53.6 L286.4 57 Q286.4 58.3 287.7 58.3 L292.9 58.3 Q294.2 58.3 294.2 57 L294.2 53.6 M285.8 68.5 L285.8 62.8 Q285.8 61.4 287.1 61.4 L292.5 61.4" fill="none" stroke="#d6d6d6" stroke-width="1.6" stroke-linejoin="round" stroke-linecap="round"/><path d="M291.6 67.6 L297.6 61.6" stroke="#282828" stroke-width="5.5" stroke-linecap="round"/><path d="M291.6 67.6 L297.6 61.6" stroke="#eeeeee" stroke-width="2.8" stroke-linecap="round"/><path d="M313.9 52.8 L314.3 58 L319.7 58.5 M314.4 57.9 Q318 52.6 322 52.6 Q327.6 52.8 327.6 58.5 Q327.6 61 325.5 63 L316.3 69.3" fill="none" stroke="#d6d6d6" stroke-width="1.6" stroke-linejoin="round" stroke-linecap="round"/><path d="M337.5 59.5 L340.7 63 L343.9 59.5" fill="none" stroke="#e8e8e8" stroke-width="1.9" stroke-linecap="round" stroke-linejoin="round"/><path d="M367.05 54.78 A7.3 7.3 0 1 0 370.59 62.37" fill="none" stroke="#727272" stroke-width="1.4"/><path d="M366.4 57.6 L369.8 57.6 L369.8 53.6" fill="none" stroke="#727272" stroke-width="1.4" stroke-linejoin="round" stroke-linecap="round"/><circle cx="387.5" cy="61" r="1.5" fill="#e0e0e0"/><circle cx="393" cy="61" r="1.5" fill="#e0e0e0"/><circle cx="398.5" cy="61" r="1.5" fill="#e0e0e0"/><path d="M723.5 53 L731.5 53 L736 57.5 L736 69 L723.5 69 Z" fill="#f0f0f0"/><rect x="721.5" y="57" width="8.5" height="8" rx="1" fill="#5aa877"/><path d="M723.9 58.8 L727.6 63.2 M727.6 58.8 L723.9 63.2" stroke="#e8f0ea" stroke-width="1"/><path d="M731.5 59.5 L731.5 63.5 M733.5 59.5 L733.5 63.5" stroke="#9ccaa9" stroke-width="0.9"/><path d="M870.5 59.5 L874.3 63 L878 59.5" fill="none" stroke="#999" stroke-width="1.3" stroke-linecap="round"/><circle cx="1263" cy="60.5" r="5" fill="none" stroke="#aaa" stroke-width="1.5"/><path d="M1266.8 64.3 L1270.6 68" stroke="#aaa" stroke-width="1.6" stroke-linecap="round"/><circle cx="1574.8" cy="59" r="2.3" fill="none" stroke="#ddd" stroke-width="1.4"/><path d="M1569.8 64 L1580 64 Q1580.3 64 1580.3 64.5 Q1580.3 69 1575 69 Q1569.5 69 1569.5 64.5 Q1569.5 64 1569.8 64 Z" fill="none" stroke="#ddd" stroke-width="1.4" stroke-linejoin="round"/><path d="M1580.5 52.8 L1584.8 52.8 Q1586.6 52.8 1586.6 54.6 L1586.6 56.8 Q1586.6 58.6 1584.8 58.6 L1583 58.6 L1580.9 60.5 L1580.9 58.6 Q1578.8 58.6 1578.8 56.8 L1578.8 54.6 Q1578.8 52.8 1580.5 52.8 Z" fill="none" stroke="#ddd" stroke-width="1.4" stroke-linejoin="round"/><path d="M1360 91 L1374 91 Q1376 91 1376 93 L1376 101 Q1376 103 1374 103 L1365.5 103 L1361.5 106.5 L1361.5 103 L1360 103 Q1358 103 1358 101 L1358 93 Q1358 91 1360 91 Z" fill="none" stroke="#e8e8e8" stroke-width="1.4" stroke-linejoin="round"/><path d="M1488 95 L1481.5 95 L1481.5 106 L1493 106 L1493 101" fill="none" stroke="#e8f5ec" stroke-width="1.4" stroke-linejoin="round"/><path d="M1485.5 102 Q1486 95.5 1493 95.5 L1493 92 L1497.5 96.8 L1493 101 L1493 98 Q1488.5 98 1485.5 102 Z" fill="none" stroke="#e8f5ec" stroke-width="1.3" stroke-linejoin="round"/><path d="M1573.5 97.5 L1577.3 101 L1581 97.5" fill="none" stroke="#e8f5ec" stroke-width="1.4" stroke-linecap="round"/><path d="M22 129.5 L19.3 129.5 L19.3 153 L32 153" fill="none" stroke="#f0a020" stroke-width="2.2"/><path d="M37 129.5 L39.8 129.5 L39.8 136" fill="none" stroke="#f0a020" stroke-width="2.2"/><path d="M23.5 131 L23.5 128 L27 128 Q27.5 123.5 30 123.3 Q32.5 123.5 33 128 L36.3 128 L36.3 131 Z" fill="#282828" stroke="#cfcfcf" stroke-width="1.3" stroke-linejoin="round"/><rect x="33" y="136.3" width="14.5" height="19" fill="#282828" stroke="#d6d6d6" stroke-width="1.4"/><path d="M53 137 L56.5 141.2 L60 137" fill="none" stroke="#ececec" stroke-width="1.9" stroke-linecap="round" stroke-linejoin="round"/><path d="M73.5 121.5 L80.2 136 M81.8 121.5 L75 136" stroke="#d0d0d0" stroke-width="1.1"/><circle cx="74" cy="136.5" r="2.2" fill="none" stroke="#3a9be0" stroke-width="1.5"/><circle cx="80.8" cy="136.5" r="2.2" fill="none" stroke="#3a9be0" stroke-width="1.5"/><path d="M74 160 L69 160 L69 145.5 L76 145.5 L77 146.5" fill="none" stroke="#d6d6d6" stroke-width="1.2"/><path d="M75.5 149 L81.5 149 L85.5 153 L85.5 162.5 L75.5 162.5 Z M81.5 149 L81.5 153 L85.5 153" fill="#282828" stroke="#d6d6d6" stroke-width="1.2" stroke-linejoin="round"/><path d="M78 156.5 L83 156.5 M78 158.8 L83 158.8" stroke="#d6d6d6" stroke-width="1"/><path d="M92.6 152 L95.85 156 L99.1 152" fill="none" stroke="#ececec" stroke-width="1.9" stroke-linecap="round" stroke-linejoin="round"/><path d="M69.2 176.7 L75.8 174.2 L81.4 180.2 L76 184.8 Z" fill="#282828" stroke="#f2b53a" stroke-width="1.3" stroke-linejoin="round"/><path d="M71.8 179.4 L81 180.4 L76 184.6 Z" fill="#e8901c"/><path d="M80.2 175.2 L84.6 170.4" stroke="#d8d8d8" stroke-width="4.2" stroke-linecap="round"/><path d="M80.2 175.2 L84.6 170.4" stroke="#282828" stroke-width="1.6" stroke-linecap="round"/><path d="M76.6 173.3 L82.2 179.2" stroke="#d8d8d8" stroke-width="2.8" stroke-linecap="round"/><path d="M77.6 174.6 L80.9 178.1" stroke="#282828" stroke-width="0.9" stroke-linecap="round"/><path d="M267 134.5 L270.5 138.8 L274 134.5" fill="none" stroke="#ececec" stroke-width="1.9" stroke-linecap="round" stroke-linejoin="round"/><path d="M328 134.5 L331.5 138.8 L335 134.5" fill="none" stroke="#ececec" stroke-width="1.9" stroke-linecap="round" stroke-linejoin="round"/><path d="M358.3 132 L360.7 128.8 L363.2 132" fill="none" stroke="#3a9be0" stroke-width="1.5" stroke-linecap="round"/><path d="M387 128.5 L389.5 131.5 L392 128.5" fill="none" stroke="#3a9be0" stroke-width="1.5" stroke-linecap="round"/><path d="M210.6 169 L214.1 173.5 L217.6 169" fill="none" stroke="#ececec" stroke-width="1.9" stroke-linecap="round" stroke-linejoin="round"/><path d="M244 162 L260.5 162 L260.5 178.5 L244 178.5 Z M252.2 162 L252.2 178.5 M244 170.2 L260.5 170.2" fill="none" stroke="#bdbdbd" stroke-width="1.1" stroke-dasharray="1.2 1.2"/><path d="M268.6 169 L272.1 173.5 L275.6 169" fill="none" stroke="#ececec" stroke-width="1.9" stroke-linecap="round" stroke-linejoin="round"/><path d="M304.6 169.6 L310.4 163.8 L316 168.4 L309.8 174.3 Z" fill="none" stroke="#d6d6d6" stroke-width="1.2" stroke-linejoin="round"/><path d="M309 167.5 L309.5 163 Q310.5 161.3 311.8 162.8 L312.6 167.3" fill="none" stroke="#d6d6d6" stroke-width="1.1"/><path d="M314.5 166.8 Q317.2 165.5 317.2 172.5" fill="none" stroke="#3a9be0" stroke-width="1.4"/><path d="M326.5 169.5 L329.9 174.0 L333.3 169.5" fill="none" stroke="#ececec" stroke-width="1.9" stroke-linecap="round" stroke-linejoin="round"/><path d="M368 169.5 L371.4 174.0 L374.8 169.5" fill="none" stroke="#ececec" stroke-width="1.9" stroke-linecap="round" stroke-linejoin="round"/><path d="M424 128 L440 128" stroke="#c4c4c4" stroke-width="2"/><path d="M427 132.4 L437 132.4" stroke="#c4c4c4" stroke-width="2"/><path d="M424 136.8 L440 136.8" stroke="#c4c4c4" stroke-width="2"/><path d="M453 131.3 L468 131.3" stroke="#c4c4c4" stroke-width="2"/><path d="M455 135.7 L466 135.7" stroke="#c4c4c4" stroke-width="2"/><path d="M453 140 L468 140" stroke="#c4c4c4" stroke-width="2"/><path d="M481 135.7 L496 135.7" stroke="#c4c4c4" stroke-width="2"/><path d="M483 140 L494 140" stroke="#c4c4c4" stroke-width="2"/><path d="M481 144.4 L496 144.4" stroke="#c4c4c4" stroke-width="2"/><path d="M424 164 L440 164" stroke="#c4c4c4" stroke-width="2"/><path d="M424 168.3 L434 168.3" stroke="#c4c4c4" stroke-width="2"/><path d="M424 172.6 L440 172.6" stroke="#c4c4c4" stroke-width="2"/><path d="M424 177 L434 177" stroke="#c4c4c4" stroke-width="2"/><path d="M453 164 L468 164" stroke="#c4c4c4" stroke-width="2"/><path d="M455 168.3 L466 168.3" stroke="#c4c4c4" stroke-width="2"/><path d="M453 172.6 L468 172.6" stroke="#c4c4c4" stroke-width="2"/><path d="M455 177 L466 177" stroke="#c4c4c4" stroke-width="2"/><path d="M481 164 L496 164" stroke="#c4c4c4" stroke-width="2"/><path d="M485 168.3 L496 168.3" stroke="#c4c4c4" stroke-width="2"/><path d="M481 172.6 L496 172.6" stroke="#c4c4c4" stroke-width="2"/><path d="M485 177 L496 177" stroke="#c4c4c4" stroke-width="2"/><path d="M530.3 143.5 L541.8 132.2 M537.6 132 L541.9 132 L541.9 136.3" fill="none" stroke="#3a9be0" stroke-width="1.3" stroke-linecap="round" stroke-linejoin="round"/><path d="M549.5 135 L552.75 139 L556.0 135" fill="none" stroke="#ececec" stroke-width="1.9" stroke-linecap="round" stroke-linejoin="round"/><path d="M525 164 L541 164" stroke="#c4c4c4" stroke-width="2"/><path d="M533 168.3 L541 168.3" stroke="#c4c4c4" stroke-width="2"/><path d="M533 172.6 L541 172.6" stroke="#c4c4c4" stroke-width="2"/><path d="M525 177 L541 177" stroke="#c4c4c4" stroke-width="2"/><path d="M531 170.5 L525.5 170.5 M528 168 L525.5 170.5 L528 173" fill="none" stroke="#3a9be0" stroke-width="1.5" stroke-linecap="round" stroke-linejoin="round"/><path d="M553 164 L569 164" stroke="#c4c4c4" stroke-width="2"/><path d="M561 168.3 L569 168.3" stroke="#c4c4c4" stroke-width="2"/><path d="M561 172.6 L569 172.6" stroke="#c4c4c4" stroke-width="2"/><path d="M553 177 L569 177" stroke="#c4c4c4" stroke-width="2"/><path d="M553.5 170.5 L559 170.5 M556.5 168 L559 170.5 L556.5 173" fill="none" stroke="#3a9be0" stroke-width="1.5" stroke-linecap="round" stroke-linejoin="round"/><path d="M614.6 136.4 Q615.5 140.8 610.5 141.3 L607 141.5 M609.2 139.2 L607 141.5 L609.2 143.8" fill="none" stroke="#3a9be0" stroke-width="1.4" stroke-linecap="round" stroke-linejoin="round"/><path d="M697 134.5 L700.5 138.8 L704 134.5" fill="none" stroke="#ececec" stroke-width="1.9" stroke-linecap="round" stroke-linejoin="round"/><rect x="597.5" y="162.5" width="16.5" height="16" fill="none" stroke="#cfcfcf" stroke-width="1.2"/><path d="M605.7 162.5 L605.7 166 M605.7 175.5 L605.7 178.5" stroke="#cfcfcf" stroke-width="1.1"/><rect x="597.8" y="166" width="16" height="9.5" fill="none" stroke="#3a9be0" stroke-width="1.2"/><path d="M601 170.7 L611 170.7 M603 168.7 L601 170.7 L603 172.7 M609 168.7 L611 170.7 L609 172.7" fill="none" stroke="#3a9be0" stroke-width="1.3" stroke-linecap="round" stroke-linejoin="round"/><path d="M709 169.5 L712.5 173.8 L716 169.5" fill="none" stroke="#ececec" stroke-width="1.9" stroke-linecap="round" stroke-linejoin="round"/><path d="M899 135 L902.25 139 L905.5 135" fill="none" stroke="#ececec" stroke-width="1.9" stroke-linecap="round" stroke-linejoin="round"/><rect x="746.5" y="166" width="16.5" height="10" fill="none" stroke="#cfcfcf" stroke-width="1.3"/><path d="M752.5 168.5 Q749.5 168.5 749.5 171 Q749.5 173.5 752.5 173.5 M756 168.5 Q753 168.5 753 171 Q753 173.5 756 173.5" fill="none" stroke="#cfcfcf" stroke-width="1.2"/><ellipse cx="758.2" cy="172.5" rx="4.3" ry="1.8" fill="#282828" stroke="#e8b84a" stroke-width="1.2"/><path d="M753.9 172.5 L753.9 178 Q753.9 179.8 758.2 179.8 Q762.5 179.8 762.5 178 L762.5 172.5 M753.9 175.3 Q755 177 758.2 177 Q761.4 177 762.5 175.3" fill="#282828" stroke="#e8b84a" stroke-width="1.2"/><path d="M771.5 169.8 L774.75 173.8 L778.0 169.8" fill="none" stroke="#ececec" stroke-width="1.9" stroke-linecap="round" stroke-linejoin="round"/><circle cx="825" cy="167.7" r="3.2" fill="#d6d6d6"/><path d="M827.6 168.5 Q828 175 822 178.5" fill="none" stroke="#d6d6d6" stroke-width="2.1" stroke-linecap="round"/><ellipse cx="874.7" cy="165.8" rx="2.05" ry="3.25" fill="none" stroke="#d4d4d4" stroke-width="1.2"/><circle cx="865" cy="178.2" r="0.75" fill="#d4d4d4"/><ellipse cx="869.1" cy="174.8" rx="2.05" ry="3.25" fill="none" stroke="#d4d4d4" stroke-width="1.2"/><ellipse cx="874.7" cy="174.8" rx="2.05" ry="3.25" fill="none" stroke="#d4d4d4" stroke-width="1.2"/><path d="M861 166.3 L870 166.3 M863.6 163.6 L861 166.3 L863.6 169" fill="none" stroke="#3a9be0" stroke-width="1.4" stroke-linecap="round" stroke-linejoin="round"/><circle cx="893.6" cy="169.2" r="0.75" fill="#d4d4d4"/><ellipse cx="898.2" cy="165.8" rx="2.05" ry="3.25" fill="none" stroke="#d4d4d4" stroke-width="1.2"/><ellipse cx="903.1" cy="165.8" rx="2.05" ry="3.25" fill="none" stroke="#d4d4d4" stroke-width="1.2"/><circle cx="898" cy="178.2" r="0.75" fill="#d4d4d4"/><ellipse cx="903.1" cy="174.8" rx="2.05" ry="3.25" fill="none" stroke="#d4d4d4" stroke-width="1.2"/><path d="M889 174.5 L897.5 174.5 M894.8 171.8 L897.5 174.5 L894.8 177.2" fill="none" stroke="#3a9be0" stroke-width="1.4" stroke-linecap="round" stroke-linejoin="round"/><path d="M953.5 126.5 L983.5 126.5 L983.5 150.0 L953.5 150.0 Z M961.0 126.5 L961.0 150.0 M968.5 126.5 L968.5 150.0 M976.0 126.5 L976.0 150.0 M953.5 134.3 L983.5 134.3 M953.5 142.2 L983.5 142.2" fill="none" stroke="#bdbdbd" stroke-width="1.3"/><rect x="957.5" y="127.5" width="15" height="7" fill="#c0392b" stroke="#d04040" stroke-width="0.8"/><rect x="957.5" y="142.5" width="17" height="7" fill="#c0392b" stroke="#d04040" stroke-width="0.8"/><rect x="957.5" y="135.3" width="10" height="6.4" fill="#1f72c8" stroke="#3a9be0" stroke-width="0.8"/><path d="M991.5 137.2 L994.75 141.2 L998.0 137.2" fill="none" stroke="#ececec" stroke-width="1.9" stroke-linecap="round" stroke-linejoin="round"/><rect x="1044.3" y="134.3" width="20.2" height="15.7" fill="#1f6fc4"/><path d="M1034.5 126.5 L1064.5 126.5 L1064.5 150.0 L1034.5 150.0 Z M1044.5 126.5 L1044.5 150.0 M1054.5 126.5 L1054.5 150.0 M1034.5 134.3 L1064.5 134.3 M1034.5 142.2 L1064.5 142.2" fill="none" stroke="#c4c4c4" stroke-width="1.4"/><path d="M1054.4 134.3 L1054.4 150 M1044.3 142.2 L1064.5 142.2" stroke="#5ab4ee" stroke-width="1.2"/><path d="M1044.3 134.3 L1064.5 134.3 M1044.3 134.3 L1044.3 150" stroke="#5ab4ee" stroke-width="0.8"/><path d="M1052.6 148.2 L1064.3 135.2 Q1066.3 133.4 1066.8 134.6 Q1067.2 135.8 1065.6 137.6 L1055.2 150.6" fill="#282828" stroke="#dadada" stroke-width="1.3" stroke-linejoin="round"/><path d="M1042 153.3 Q1046.8 152.6 1048.2 149.4 Q1050 146.8 1053 148 Q1055.6 149.6 1054.4 151.6 Q1052 155 1042 153.3 Z" fill="#1f6fc4" stroke="#4aa8e8" stroke-width="1"/><path d="M1072.5 137.2 L1075.75 141.2 L1079.0 137.2" fill="none" stroke="#ececec" stroke-width="1.9" stroke-linecap="round" stroke-linejoin="round"/><path d="M1100.5 126.5 L1130.5 126.5 L1130.5 131.3 M1100.5 126.5 L1100.5 150 L1113 150 M1105.2 126.5 L1105.2 150 M1124.9 126.5 L1124.9 132 M1100.5 131.3 L1130.5 131.3 M1100.5 145.6 L1105.2 145.6" fill="none" stroke="#c4c4c4" stroke-width="1.4"/><rect x="1105.6" y="132.4" width="19.3" height="12.4" fill="#1f6fc4" stroke="#5ab4ee" stroke-width="0.8"/><path d="M1118.6 148.2 L1130.3 135.2 Q1132.3 133.4 1132.8 134.6 Q1133.2 135.8 1131.6 137.6 L1121.2 150.6" fill="#282828" stroke="#dadada" stroke-width="1.3" stroke-linejoin="round"/><path d="M1108 153.3 Q1112.8 152.6 1114.2 149.4 Q1116 146.8 1119 148 Q1121.6 149.6 1120.4 151.6 Q1118 155 1108 153.3 Z" fill="#1f6fc4" stroke="#4aa8e8" stroke-width="1"/><path d="M1138 137.2 L1141.25 141.2 L1144.5 137.2" fill="none" stroke="#ececec" stroke-width="1.9" stroke-linecap="round" stroke-linejoin="round"/><path d="M1174.5 122.5 L1191.0 122.5 L1191.0 137.0 L1174.5 137.0 Z M1180.0 122.5 L1180.0 137.0 M1185.5 122.5 L1185.5 137.0 M1174.5 127.3 L1191.0 127.3 M1174.5 132.2 L1191.0 132.2" fill="none" stroke="#c8c8c8" stroke-width="1.2"/><rect x="1180" y="126.5" width="11" height="6.5" fill="#1f72c8"/><path d="M1186 129.8 L1175.5 129.8 M1178.3 127 L1175.5 129.8 L1178.3 132.6" fill="none" stroke="#3a9be0" stroke-width="1.4" stroke-linecap="round" stroke-linejoin="round"/><path d="M1250 128 L1253.5 132.2 L1257 128" fill="none" stroke="#ececec" stroke-width="1.9" stroke-linecap="round" stroke-linejoin="round"/><path d="M1174.5 146.5 L1191.0 146.5 L1191.0 161.0 L1174.5 161.0 Z M1180.0 146.5 L1180.0 161.0 M1185.5 146.5 L1185.5 161.0 M1174.5 151.3 L1191.0 151.3 M1174.5 156.2 L1191.0 156.2" fill="none" stroke="#c8c8c8" stroke-width="1.2"/><rect x="1177" y="150.5" width="6" height="6.5" fill="#1f72c8" stroke="#3a9be0" stroke-width="1"/><path d="M1185 150.5 L1190.5 156.5 M1190.5 150.5 L1185 156.5" stroke="#e04848" stroke-width="1.3"/><path d="M1244 152 L1247.25 156.2 L1250.5 152" fill="none" stroke="#ececec" stroke-width="1.9" stroke-linecap="round" stroke-linejoin="round"/><path d="M1174.5 171.5 L1191.0 171.5 L1191.0 186.0 L1174.5 186.0 Z M1180.0 171.5 L1180.0 186.0 M1185.5 171.5 L1185.5 186.0 M1174.5 176.3 L1191.0 176.3 M1174.5 181.2 L1191.0 181.2" fill="none" stroke="#c8c8c8" stroke-width="1.2"/><rect x="1178" y="175" width="10" height="7.5" fill="#1f72c8" stroke="#3a9be0" stroke-width="1"/><path d="M1177.5 169.5 L1188 169.5 M1177.5 168 L1177.5 171 M1188 168 L1188 171" stroke="#3a9be0" stroke-width="1.2"/><path d="M1250 176 L1253.5 180.2 L1257 176" fill="none" stroke="#ececec" stroke-width="1.9" stroke-linecap="round" stroke-linejoin="round"/><path d="M1301 124 L1301 122.5 L1288.5 122.5 L1295 130 L1288.5 137.5 L1301.5 137.5 L1301.5 136" fill="none" stroke="#d0d0d0" stroke-width="1.3"/><path d="M1310 128 L1313.25 132 L1316.5 128" fill="none" stroke="#ececec" stroke-width="1.9" stroke-linecap="round" stroke-linejoin="round"/><rect x="1286.3" y="146.3" width="17" height="14.5" fill="none" stroke="#c8c8c8" stroke-width="1.3"/><path d="M1286.3 149.5 L1303.3 149.5" stroke="#c8c8c8" stroke-width="1"/><path d="M1294.8 151.5 L1294.8 158 M1292.3 155.5 L1294.8 158 L1297.3 155.5" fill="none" stroke="#3a9be0" stroke-width="1.4" stroke-linecap="round" stroke-linejoin="round"/><path d="M1310 152 L1313.25 156 L1316.5 152" fill="none" stroke="#ececec" stroke-width="1.9" stroke-linecap="round" stroke-linejoin="round"/><path d="M1286.8 179 L1296.4 170 L1302.2 176.3 L1292.6 185.5 Z" fill="none" stroke="#b45cc8" stroke-width="1.3" stroke-linejoin="round"/><path d="M1286.8 179 L1290.8 175 L1296.8 181.5 L1292.6 185.5 Z" fill="#b45cc8"/><path d="M1310 176 L1313.25 180 L1316.5 176" fill="none" stroke="#ececec" stroke-width="1.9" stroke-linecap="round" stroke-linejoin="round"/><path d="M1339.5 131.5 L1356.5 131.5 L1356.5 133 L1350 140 L1350 148 L1346 148 L1346 140 L1339.5 133 Z" fill="none" stroke="#d0d0d0" stroke-width="1.2" stroke-linejoin="round"/><path d="M1364 137 L1367.25 141 L1370.5 137" fill="none" stroke="#ececec" stroke-width="1.9" stroke-linecap="round" stroke-linejoin="round"/><circle cx="1400.5" cy="134.3" r="11.3" fill="none" stroke="#d0d0d0" stroke-width="1.3"/><path d="M1392.5 142.3 L1381.3 154.5" stroke="#d0d0d0" stroke-width="1.3" stroke-linecap="round"/><path d="M1420 137 L1423.25 141 L1426.5 137" fill="none" stroke="#ececec" stroke-width="1.9" stroke-linecap="round" stroke-linejoin="round"/><rect x="1474.5" y="123" width="31" height="31" fill="none" stroke="#d4442a" stroke-width="1.5"/><rect x="1477.5" y="125.8" width="11.8" height="11.8" fill="none" stroke="#d4442a" stroke-width="1.3"/><rect x="1491.2" y="125.8" width="11.8" height="11.8" fill="none" stroke="#d4442a" stroke-width="1.3"/><rect x="1477.5" y="139.5" width="11.8" height="11.8" fill="none" stroke="#d4442a" stroke-width="1.3"/><rect x="1491.2" y="139.5" width="11.8" height="11.8" fill="none" stroke="#d4442a" stroke-width="1.3"/><path d="M83.5 206 L87 199.8 L90.5 206 Z M83.5 212.3 L87 218.7 L90.5 212.3 Z" fill="#c8c8c8"/><path d="M110 206.8 L119.5 215.4 M119.5 206.8 L110 215.4" stroke="#5e5e5e" stroke-width="2.2"/><path d="M139.8 210.8 L144.5 215.5 L154 206.3" fill="none" stroke="#5e5e5e" stroke-width="2.2"/><path d="M1581.5 206 L1591.5 206 L1586.5 213.5 Z" fill="#d0d0d0"/><path d="M5 255.5 L28.5 255.5 L28.5 232 Z" fill="#5c5c5c"/><path d="M1412.5 442 L1412.5 438.5 L1415 438.5 L1415 436 L1418.5 436 L1418.5 442.5 Z" fill="#1f5fb0"/><path d="M209.3 282.0 L218.2 282.0 L213.75 286.5 Z" fill="#7c7c7c"/><path d="M408.3 282.0 L417.2 282.0 L412.75 286.5 Z" fill="#7c7c7c"/><path d="M607.3 282.0 L616.2 282.0 L611.75 286.5 Z" fill="#7c7c7c"/><path d="M807.3 282.0 L816.2 282.0 L811.75 286.5 Z" fill="#7c7c7c"/><path d="M1006.3 282.0 L1015.2 282.0 L1010.75 286.5 Z" fill="#7c7c7c"/><path d="M1205.3 282.0 L1214.2 282.0 L1209.75 286.5 Z" fill="#7c7c7c"/><path d="M1404.3 282.0 L1413.2 282.0 L1408.75 286.5 Z" fill="#7c7c7c"/><path d="M24 998 L24 1007.8 L16.5 1002.9 Z" fill="#6a6a6a"/><path d="M41.5 998 L41.5 1007.8 L49 1002.9 Z" fill="#6a6a6a"/><path d="M629.5 1001.2 L641 1001.2 M635.2 995.5 L635.2 1007" stroke="#d6d6d6" stroke-width="2"/><circle cx="95.1" cy="1022.4" r="1.9" fill="none" stroke="#e4e4e4" stroke-width="1.3"/><path d="M88.6 1024.3 Q95 1026.6 101.8 1024.2 Q103 1024.6 102.3 1025.9 Q99.5 1027 97.6 1027.3 L97 1028.6 M92.7 1027.1 L91.2 1034.4 Q91.6 1035.9 93.2 1035.3 L94.8 1031.6 L95.8 1032.8 M88.6 1024.3 Q87.8 1025.5 88.9 1026.1 Q91 1026.8 92.7 1027.1" fill="none" stroke="#e4e4e4" stroke-width="1.3" stroke-linecap="round" stroke-linejoin="round"/><path d="M96.6 1028.8 L103.9 1035.8 M103.9 1028.8 L96.6 1035.8" stroke="#e4e4e4" stroke-width="1.3" stroke-linecap="round"/><rect x="1266.5" y="1021.5" width="13.5" height="13.5" fill="none" stroke="#e8e8e8" stroke-width="1.3"/><path d="M1271 1021.5 L1271 1035 M1275.5 1021.5 L1275.5 1035 M1266.5 1026 L1280 1026 M1266.5 1030.5 L1280 1030.5" stroke="#e8e8e8" stroke-width="1.2"/><rect x="1304.5" y="1021.5" width="15" height="13.5" fill="none" stroke="#e0e0e0" stroke-width="1.3"/><rect x="1307.5" y="1024" width="9" height="8.5" fill="none" stroke="#e0e0e0" stroke-width="1"/><path d="M1309.5 1026.5 L1314.5 1026.5 M1309.5 1028.3 L1314.5 1028.3 M1309.5 1030 L1314.5 1030" stroke="#e0e0e0" stroke-width="0.8"/><path d="M1343.5 1021.5 L1358.5 1021.5 L1358.5 1035 L1343.5 1035 Z M1343.5 1028 L1352 1028 L1352 1021.5 M1347.5 1021.5 L1347.5 1028" fill="none" stroke="#e0e0e0" stroke-width="1.3"/><circle cx="1455" cy="1028.5" r="8.5" fill="#9c9c9c"/><path d="M1511 1028.5 L1521 1028.5 M1516 1023.5 L1516 1033.5" stroke="#e8e8e8" stroke-width="2"/></svg></body></html>
